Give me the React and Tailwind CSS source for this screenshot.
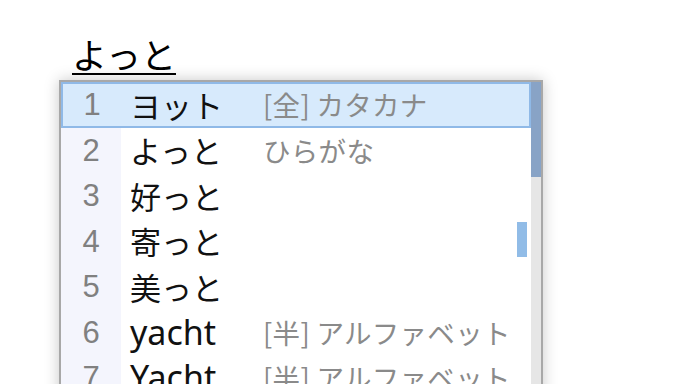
import React from 'react';

const rows = [
    { n: '1', text: 'ヨット', note: '[全] カタカナ' },
    { n: '2', text: 'よっと', note: 'ひらがな' },
    { n: '3', text: '好っと', note: '' },
    { n: '4', text: '寄っと', note: '' },
    { n: '5', text: '美っと', note: '' },
    { n: '6', text: 'yacht', note: '[半] アルファベット', latin: true },
    { n: '7', text: 'Yacht', note: '[半] アルファベット', latin: true },
];

const font = "font-['Noto_Sans_CJK_JP','Noto_Sans',sans-serif]";

export default function App() {
    return (
        <div className={`w-[688px] h-[384px] bg-white overflow-hidden ${font}`}>
            <div className="pl-[72px] pt-[36px] h-[80px]">
                <span className="inline-block text-[35px] leading-[36px] text-black border-b-2 border-black pb-[1px]">よっと</span>
            </div>

            <div className="ml-[59px] w-[484px] h-[320px] border-2 border-[#a8a8a8] flex shadow-[0_0_14px_rgba(0,0,0,0.22)]">
                <div className="flex-1 relative">
                    {rows.map((r, i) => {
                        const sel = i === 0;
                        return (
                            <div
                                key={r.n}
                                className={`flex items-center h-[45.5px] ${sel ? 'bg-[#d7eafc] border-2 border-[#8fb9e7]' : ''}`}
                            >
                                <div className={`h-full flex items-center justify-center pt-[1px] text-[#808080] text-[31px] font-['Liberation_Sans',sans-serif] ${sel ? 'w-[58px]' : 'w-[60px] bg-[#f4f5fd]'}`}>
                                    {r.n}
                                </div>
                                <div className={`w-[142px] pl-[9px] text-[#111] whitespace-nowrap ${r.latin ? "text-[34px] font-['Noto_Sans',sans-serif]" : 'text-[31px]'}`}>{r.text}</div>
                                <div className="text-[27.5px] tracking-[0.3px] text-[#8a8a8a] whitespace-nowrap">{r.note}</div>
                            </div>
                        );
                    })}
                    <div className="absolute left-[456px] top-[140px] w-[10px] h-[35px] bg-[#91bce7]" />
                </div>
                <div className="w-[10px] flex flex-col">
                    <div className="h-[95px] bg-[#88a3c6]" />
                    <div className="flex-1 bg-[#e6e6e6]" />
                </div>
            </div>
        </div>
    );
}
